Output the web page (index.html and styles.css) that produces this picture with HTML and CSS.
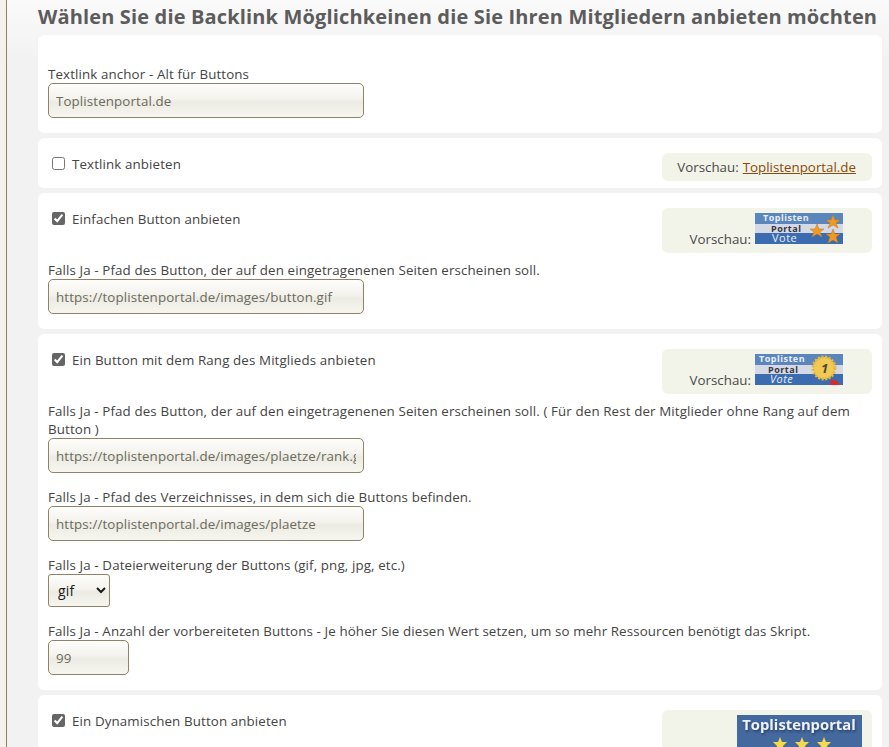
FILE: index.html
```html
<!DOCTYPE html>
<html lang="de">
<head>
    <meta charset="UTF-8">
    <title>Backlink Optionen</title>
    <link rel="stylesheet" href="styles.css">
</head>
<body>
    <div class="sidebar"></div>
    <div class="main">
        <h1>Wählen Sie die Backlink Möglichkeinen die Sie Ihren Mitgliedern anbieten möchten</h1>

        <div class="card card-anchor">
            <label class="field-label">Textlink anchor - Alt für Buttons</label>
            <input class="field" type="text" value="Toplistenportal.de">
        </div>

        <div class="card card-textlink">
            <div class="option-row">
                <label class="check"><input type="checkbox"> Textlink anbieten</label>
                <div class="preview preview-link">Vorschau: <a href="#">Toplistenportal.de</a></div>
            </div>
        </div>

        <div class="card">
            <div class="option-row">
                <label class="check"><input type="checkbox" checked> Einfachen Button anbieten</label>
                <div class="preview">Vorschau:
                    <svg class="badge" width="88" height="31" viewBox="0 0 88 31">
                        <rect width="88" height="31" fill="#5b86bd"/>
                        <rect y="11" width="88" height="9" fill="#d5d9e6"/>
                        <rect y="20" width="88" height="11" fill="#3c6cb0"/>
                        <text x="8" y="8" class="badge-top">Toplisten</text>
                        <text x="16" y="18.500" class="badge-mid">Portal</text>
                        <text x="17" y="29" class="badge-vote">Vote</text>
                        <polygon points="62,11 64,16 69,16 65,19 67,24 62,21 57,24 59,19 55,16 60,16" fill="#f39a1e" stroke="#b9772a" stroke-width=".5"/>
                        <polygon points="78,2 80,7 85,7 81,10 83,15 78,12 73,15 75,10 71,7 76,7" fill="#f39a1e" stroke="#b9772a" stroke-width=".5"/>
                        <polygon points="78,16 80,21 85,21 81,24 83,30 78,27 73,30 75,24 71,21 76,21" fill="#f39a1e" stroke="#b9772a" stroke-width=".5"/>
                    </svg>
                </div>
            </div>
            <label class="field-label label-path">Falls Ja - Pfad des Button, der auf den eingetragenenen Seiten erscheinen soll.</label>
            <input class="field" type="text" value="https://toplistenportal.de/images/button.gif">
        </div>

        <div class="card">
            <div class="option-row">
                <label class="check"><input type="checkbox" checked> Ein Button mit dem Rang des Mitglieds anbieten</label>
                <div class="preview">Vorschau:
                    <svg class="badge" width="88" height="31" viewBox="0 0 88 31">
                        <rect width="88" height="31" fill="#5b86bd"/>
                        <rect y="11" width="88" height="9" fill="#d5d9e6"/>
                        <rect y="20" width="88" height="11" fill="#3c6cb0"/>
                        <text x="4" y="8" class="badge-top">Toplisten</text>
                        <text x="13" y="18.500" class="badge-mid">Portal</text>
                        <text x="15" y="29" class="badge-vote badge-italic">Vote</text>
                        <circle cx="69" cy="14" r="11" fill="#f0ca55" stroke="#e8b63a" stroke-width="3" stroke-dasharray="2 1.500"/>
                        <text x="66" y="19" class="badge-rank">1</text>
                        <polygon points="76,25 82,27 85,31 75,31" fill="#d92b2b"/>
                    </svg>
                </div>
            </div>
            <label class="field-label label-path">Falls Ja - Pfad des Button, der auf den eingetragenenen Seiten erscheinen soll. ( Für den Rest der Mitglieder ohne Rang auf dem Button )</label>
            <input class="field" type="text" value="https://toplistenportal.de/images/plaetze/rank.gif">
            <label class="field-label label-next">Falls Ja - Pfad des Verzeichnisses, in dem sich die Buttons befinden.</label>
            <input class="field" type="text" value="https://toplistenportal.de/images/plaetze">
            <label class="field-label label-next">Falls Ja - Dateierweiterung der Buttons (gif, png, jpg, etc.)</label>
            <select class="field field-select"><option>gif</option></select>
            <label class="field-label label-next">Falls Ja - Anzahl der vorbereiteten Buttons - Je höher Sie diesen Wert setzen, um so mehr Ressourcen benötigt das Skript.</label>
            <input class="field field-small" type="text" value="99">
        </div>

        <div class="card">
            <div class="option-row">
                <label class="check"><input type="checkbox" checked> Ein Dynamischen Button anbieten</label>
                <div class="preview preview-big">
                    <svg class="badge-big" width="125" height="60" viewBox="0 0 125 60">
                        <rect width="125" height="60" fill="#44699f"/>
                        <text x="62" y="15" class="big-title">Toplistenportal</text>
                        <polygon points="43,22 45,27 50,27 46,31 47,36 43,33 39,36 40,31 36,27 41,27" fill="#f5d94a"/>
                        <polygon points="65,22 67,27 72,27 68,31 69,36 65,33 61,36 62,31 58,27 63,27" fill="#f5d94a"/>
                        <polygon points="87,22 89,27 94,27 90,31 91,36 87,33 83,36 84,31 80,27 85,27" fill="#f5d94a"/>
                    </svg>
                </div>
            </div>
        </div>
    </div>
</body>
</html>
```

FILE: styles.css
```css
body {
    margin: 0;
    height: 747px;
    overflow: hidden;
    display: flex;
    font-family: "Open Sans", sans-serif;
    font-size: 13.33px;
    letter-spacing: .12px;
    color: #4a4a4a;
    background: #f2f2f2;
}
.sidebar {
    width: 6px;
    flex-shrink: 0;
    background: #f5f2ea;
    border-right: 1px solid #8f8266;
}
.main {
    flex: 1;
    min-width: 0;
    padding: 0 7px 0 31px;
    background: linear-gradient(#fafafa, #f2f2f2 60px);
}
h1 {
    margin: 0;
    padding-top: 4px;
    height: 35px;
    box-sizing: border-box;
    font-size: 20px;
    letter-spacing: .15px;
    line-height: 25px;
    font-weight: 700;
    color: #5c5c5c;
    white-space: nowrap;
}
.card {
    background: #fff;
    border-radius: 6px;
    padding: 15px 10px;
    margin-bottom: 5px;
}
.card-anchor {
    padding-top: 30px;
}
.card-textlink {
    height: 50px;
    box-sizing: border-box;
}
.field-label {
    display: block;
    line-height: 18px;
    color: #444;
}
.label-path {
    margin-top: 8px;
}
.label-next {
    margin-top: 15px;
}
.field {
    display: block;
    box-sizing: border-box;
    width: 316px;
    height: 35px;
    padding: 0 7px;
    border: 1px solid #8f8266;
    border-radius: 5px;
    font-family: "Open Sans", sans-serif;
    font-size: 13.33px;
    letter-spacing: .12px;
    color: #6b6b5c;
    background: linear-gradient(#fdfdfb, #f4f2ec 45%, #ecebe3 55%, #f6f5ef);
}
.field-select {
    width: 62px;
    height: 33px;
    padding: 0 5px;
    border-radius: 3px;
    font-size: 14px;
    color: #1a1a1a;
}
.field-small {
    width: 81px;
}
.option-row {
    display: flex;
    justify-content: space-between;
    align-items: flex-start;
}
.check {
    display: flex;
    align-items: center;
    gap: 7px;
    padding-left: 4px;
    margin-top: 2px;
    line-height: 18px;
    color: #444;
}
.check input {
    margin: -2px 0 0;
    width: 13px;
    height: 13px;
    accent-color: #666;
}
.preview {
    width: 210px;
    height: 45px;
    box-sizing: border-box;
    background: #f2f3e9;
    border-radius: 6px;
    padding: 5px 29px 9px 0;
    display: flex;
    justify-content: flex-end;
    align-items: flex-end;
    gap: 4px;
    line-height: 10px;
    letter-spacing: 0;
}
.preview-link {
    height: 28px;
    padding: 0 16px 0 0;
    align-items: center;
    line-height: 18px;
}
.preview-link a {
    color: #8a4b08;
}
.preview-big {
    height: 100px;
    padding: 5px 10px 0 0;
    align-items: flex-start;
}
.badge {
    display: block;
}
.badge-big {
    display: block;
    flex-shrink: 0;
}
.badge text {
    font-family: "Open Sans", sans-serif;
    letter-spacing: .5px;
}
.badge-top {
    font-size: 9px;
    font-weight: 700;
    fill: #e8eef7;
}
.badge-mid {
    font-size: 9px;
    font-weight: 700;
    fill: #35353f;
}
.badge-vote {
    font-size: 11px;
    fill: #e6eefa;
}
.badge-italic {
    font-style: italic;
}
.badge-rank {
    font-size: 13px;
    font-weight: 700;
    font-style: italic;
    fill: #4a4a30;
}
.big-title {
    font-family: "Open Sans", sans-serif;
    font-size: 14.8px;
    font-weight: 700;
    fill: #eef2f8;
    text-anchor: middle;
    filter: drop-shadow(1px 2px 1px #2c4468);
}
```
